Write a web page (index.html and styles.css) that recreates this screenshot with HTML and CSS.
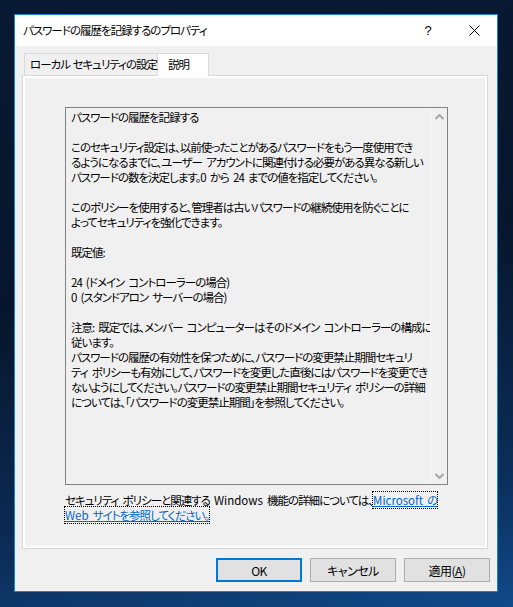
FILE: index.html
```html
<!DOCTYPE html>
<html lang="ja">
<head>
    <meta charset="UTF-8">
    <title>パスワードの履歴を記録するのプロパティ</title>
    <link rel="stylesheet" href="styles.css">
</head>
<body>
    <div class="window">
        <div class="titlebar">
            <span class="title">パスワードの履歴を記録するのプロパティ</span>
            <span class="caption-btn help">?</span>
            <span class="caption-btn close">
                <svg width="11" height="11" viewBox="0 0 11 11">
                    <path d="M0.5 0.5 L10.5 10.5 M10.5 0.5 L0.5 10.5" stroke="#000" stroke-width="1" fill="none"/>
                </svg>
            </span>
        </div>

        <div class="dialog-body">
            <div class="tabs">
                <div class="tab">ローカル セキュリティの設定</div>
                <div class="tab active">説明</div>
            </div>

            <div class="panel">
                <div class="page">
                    <div class="textbox">
                        <div class="text">
                            <p>パスワードの履歴を記録する</p>
                            <p>このセキュリティ設定は、以前使ったことがあるパスワードをもう一度使用でき<br>るようになるまでに、ユーザー アカウントに関連付ける必要がある異なる新しい<br>パスワードの数を決定します。0 から 24 までの値を指定してください。</p>
                            <p>このポリシーを使用すると、管理者は古いパスワードの継続使用を防ぐことに<br>よってセキュリティを強化できます。</p>
                            <p>既定値:</p>
                            <p>24 (ドメイン コントローラーの場合)<br>0 (スタンドアロン サーバーの場合)</p>
                            <p>注意: 既定では、メンバー コンピューターはそのドメイン コントローラーの構成に<br>従います。<br>パスワードの履歴の有効性を保つために、パスワードの変更禁止期間セキュリ<br>ティ ポリシーも有効にして、パスワードを変更した直後にはパスワードを変更でき<br>ないようにしてください。パスワードの変更禁止期間セキュリティ ポリシーの詳細<br>については、「パスワードの変更禁止期間」を参照してください。</p>
                        </div>
                        <div class="scrollbar">
                            <span class="arrow">
                                <svg width="9" height="6" viewBox="0 0 9 6"><path d="M0.5 5 L4.5 1 L8.5 5" stroke="#a6a6a6" stroke-width="2" fill="none"/></svg>
                            </span>
                            <span class="arrow">
                                <svg width="9" height="6" viewBox="0 0 9 6"><path d="M0.5 1 L4.5 5 L8.5 1" stroke="#a6a6a6" stroke-width="2" fill="none"/></svg>
                            </span>
                        </div>
                    </div>
                    <p class="more">セキュリティ ポリシーと関連する <span class="latin">Windows</span> 機能の詳細については、<a href="#" class="link"><span class="focus"><span class="latin">Microsoft</span> の</span><br><span class="focus"><span class="latin">Web</span> サイトを参照してください。</span></a></p>
                </div>
            </div>

            <div class="buttons">
                <button class="btn default">OK</button>
                <button class="btn">キャンセル</button>
                <button class="btn">適用(<u>A</u>)</button>
            </div>
        </div>
    </div>
</body>
</html>
```

FILE: styles.css
```css
* {
    box-sizing: border-box;
    margin: 0;
    padding: 0;
}

body {
    width: 513px;
    height: 607px;
    overflow: hidden;
    padding: 14px 0 0 14px;
    background: linear-gradient(170deg, #081a33 0%, #07162c 45%, #0b2d58 80%, #114a8a 100%);
    font-family: "Noto Sans CJK JP", "Noto Sans", sans-serif;
    font-size: 11.5px;
    letter-spacing: -1px;
    word-spacing: 2.5px;
    font-feature-settings: "palt";
    color: #000;
}

.window {
    width: 484px;
    height: 578px;
    border: 1px solid #1883d7;
    background: #f0f0f0;
    display: flex;
    flex-direction: column;
}

.titlebar {
    height: 31px;
    background: #fff;
    display: flex;
    align-items: center;
}

.title {
    flex: 1;
    padding-left: 8px;
    line-height: 31px;
}

.caption-btn {
    width: 46px;
    height: 31px;
    display: flex;
    align-items: center;
    justify-content: center;
}

.help {
    font-family: "Liberation Sans", sans-serif;
    font-size: 13px;
    letter-spacing: 0;
}

.dialog-body {
    flex: 1;
    padding: 7px 7px 9px 7px;
    display: flex;
    flex-direction: column;
}

.tabs {
    display: flex;
    padding-left: 2px;
    height: 22px;
    position: relative;
    z-index: 1;
}

.tab {
    width: 134px;
    height: 22px;
    padding-left: 5px;
    border: 1px solid #d9d9d9;
    border-bottom: none;
    background: #f0f0f0;
    line-height: 20px;
    word-spacing: 1px;
    white-space: nowrap;
}

.tab.active {
    width: 51px;
    height: 23px;
    padding-left: 10px;
    border-left: none;
    background: #fff;
}

.panel {
    width: 466px;
    height: 474px;
    border: 1px solid #d9d9d9;
    background: #fff;
    padding: 2px;
}

.page {
    height: 100%;
    background: #f0f0f0;
    padding: 29px 0 0 40px;
}

.textbox {
    width: 383px;
    height: 378px;
    border: 1px solid #828282;
    display: flex;
}

.text {
    flex: 1;
    padding: 2px 0 0 5px;
    line-height: 15px;
    white-space: nowrap;
    overflow: hidden;
}

.text p {
    margin-bottom: 15px;
}

.scrollbar {
    width: 17px;
    border-left: 1px solid #f9f9f9;
    display: flex;
    flex-direction: column;
    justify-content: space-between;
}

.arrow {
    height: 17px;
    display: flex;
    align-items: center;
    justify-content: center;
}

.more {
    margin-top: 8px;
    line-height: 15px;
    white-space: nowrap;
}

.latin {
    letter-spacing: 0;
}

.link {
    color: #0066cc;
}

.focus {
    outline: 1px dotted #000;
}

.buttons {
    margin-top: 9px;
    display: flex;
    justify-content: flex-end;
    gap: 8px;
}

.btn {
    width: 86px;
    height: 24px;
    border: 1px solid #adadad;
    background: #e1e1e1;
    font-family: inherit;
    font-size: 12px;
    letter-spacing: -0.5px;
    font-feature-settings: "palt";
    color: #000;
}

.btn.default {
    border: 2px solid #0078d7;
}
```
